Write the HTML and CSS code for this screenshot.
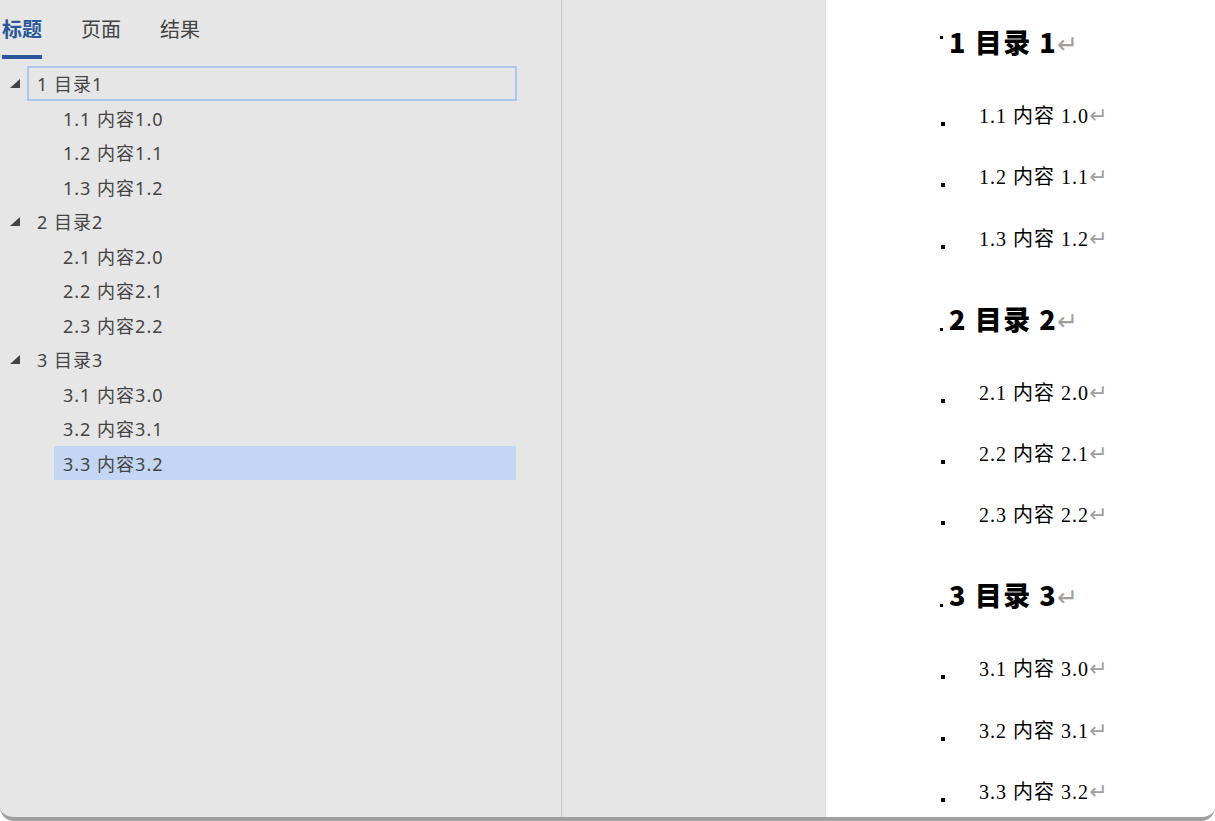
FILE: index.html
```html
<html>
<head><title>导航</title>
<meta name="viewport" content="width=device-width, initial-scale=1.0">
<link rel="stylesheet" href="styles.css">
</head>
<body>
<div class="app">
	<div class="nav">
		<div class="tabs">
			<div class="tab active">标题</div>
			<div class="tab">页面</div>
			<div class="tab">结果</div>
		</div>
		<div class="tree">
			<div class="row top"><span class="arrow"><svg width="10" height="9" viewBox="0 0 10 9"><polygon points="10,0 10,9 0,9" fill="#444"/></svg></span><span class="label boxed">1 目录1</span></div>
			<div class="row sub"><span class="label">1.1 内容1.0</span></div>
			<div class="row sub"><span class="label">1.2 内容1.1</span></div>
			<div class="row sub"><span class="label">1.3 内容1.2</span></div>
			<div class="row top"><span class="arrow"><svg width="10" height="9" viewBox="0 0 10 9"><polygon points="10,0 10,9 0,9" fill="#444"/></svg></span><span class="label">2 目录2</span></div>
			<div class="row sub"><span class="label">2.1 内容2.0</span></div>
			<div class="row sub"><span class="label">2.2 内容2.1</span></div>
			<div class="row sub"><span class="label">2.3 内容2.2</span></div>
			<div class="row top"><span class="arrow"><svg width="10" height="9" viewBox="0 0 10 9"><polygon points="10,0 10,9 0,9" fill="#444"/></svg></span><span class="label">3 目录3</span></div>
			<div class="row sub"><span class="label">3.1 内容3.0</span></div>
			<div class="row sub"><span class="label">3.2 内容3.1</span></div>
			<div class="row sub"><span class="label selected">3.3 内容3.2</span></div>
		</div>
	</div>
	<div class="gutter"></div>
	<div class="doc">
		<div class="h"><span class="hdot high"></span>1 目录 1<span class="ret">↵</span></div>
		<div class="p"><span class="pdot"></span>1.1 内容 1.0<span class="ret">↵</span></div>
		<div class="p"><span class="pdot"></span>1.2 内容 1.1<span class="ret">↵</span></div>
		<div class="p"><span class="pdot"></span>1.3 内容 1.2<span class="ret">↵</span></div>
		<div class="h"><span class="hdot"></span>2 目录 2<span class="ret">↵</span></div>
		<div class="p"><span class="pdot"></span>2.1 内容 2.0<span class="ret">↵</span></div>
		<div class="p"><span class="pdot"></span>2.2 内容 2.1<span class="ret">↵</span></div>
		<div class="p"><span class="pdot"></span>2.3 内容 2.2<span class="ret">↵</span></div>
		<div class="h"><span class="hdot"></span>3 目录 3<span class="ret">↵</span></div>
		<div class="p"><span class="pdot"></span>3.1 内容 3.0<span class="ret">↵</span></div>
		<div class="p"><span class="pdot"></span>3.2 内容 3.1<span class="ret">↵</span></div>
		<div class="p"><span class="pdot"></span>3.3 内容 3.2<span class="ret">↵</span></div>
	</div>
</div>
</body>
</html>
```

FILE: styles.css
```css
body {margin: 0; background: #fff; overflow: hidden}
.app
{
	display: flex;
	height: 817px;
	border-bottom: 4px solid #a0a0a0;
	border-radius: 0 0 14px 14px;
	overflow: hidden;
	background: #e6e6e6;
}
.nav
{
	width: 561px;
	border-right: 1px solid #c8c8c8;
	font-family: "Noto Sans", "Noto Sans CJK SC", sans-serif;
	color: #444;
}
.tabs
{
	display: flex;
	gap: 39px;
	padding-left: 2px;
	height: 59px;
}
.tab
{
	font-size: 20px;
	line-height: 20px;
	padding-top: 20px;
	height: 59px;
	border-bottom: 4px solid transparent;
	box-sizing: border-box;
}
.tab.active
{
	color: #2b579a;
	font-weight: bold;
	border-bottom-color: #2b579a;
}
.tree {padding-top: 7px}
.row
{
	display: flex;
	height: 34.5px;
	font-size: 18px;
	letter-spacing: 1px;
}
.arrow
{
	width: 27px;
	display: flex;
	align-items: center;
	padding-left: 10px;
	box-sizing: border-box;
}
.row.sub {padding-left: 54px}
.label
{
	flex: 0 0 auto;
	width: 490px;
	box-sizing: border-box;
	padding-left: 8px;
	display: flex;
	align-items: center;
	border: 2px solid transparent;
}
.row.sub .label {width: 462px; padding-left: 7px}
.label.boxed {border-color: #adc6ec}
.label.selected {background: #c3d6f2; border-color: #c3d6f2}
.gutter
{
	width: 263px;
	border-right: 1px solid #dcdcdc;
}
.doc
{
	flex: 1;
	background: #fff;
	padding-left: 114px;
	color: #000;
}
.h
{
	height: 48px;
	line-height: 48px;
	margin-top: 25.7px;
	margin-bottom: 19px;
	font-family: "Noto Sans CJK SC", sans-serif;
	font-weight: 900;
	font-size: 27px;
	letter-spacing: 1.5px;
}
.h:first-child {margin-top: 18px}
.hdot
{
	display: inline-block;
	width: 3px;
	height: 3px;
	background: #000;
	margin-right: 6px;
	vertical-align: -1px;
}
.hdot.high {vertical-align: 14px}
.p
{
	height: 61.33px;
	line-height: 61.33px;
	font-family: "Liberation Serif", "Noto Sans CJK SC", serif;
	font-size: 20px;
	letter-spacing: 1px;
}
.pdot
{
	display: inline-block;
	width: 4px;
	height: 4px;
	background: #000;
	margin-left: 1px;
	margin-right: 34px;
	vertical-align: -3px;
}
.ret
{
	color: #a0a0a0;
	font-family: "DejaVu Sans", sans-serif;
	font-weight: normal;
	font-size: 22px;
	letter-spacing: 0;
}
.h .ret {font-size: 25px}
```
